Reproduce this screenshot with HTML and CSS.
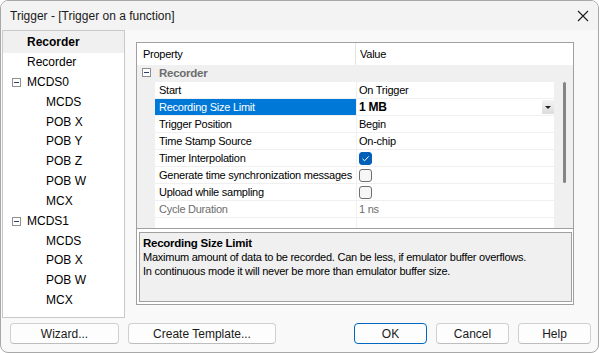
FILE: index.html
```html
<!DOCTYPE html>
<html lang="en">
<head>
    <meta charset="UTF-8">
    <title>Trigger - [Trigger on a function]</title>
    <link rel="stylesheet" href="styles.css">
</head>
<body>
<div class="window">
    <div class="titlebar">
        <span class="title">Trigger - [Trigger on a function]</span>
        <svg class="close" width="12" height="12" viewBox="0 0 12 12">
            <path d="M1 1 L11 11 M11 1 L1 11" stroke="#1b1b1b" stroke-width="1.1" fill="none"/>
        </svg>
    </div>

    <div class="content">
        <div class="tree">
            <div class="node first selected"><b>Recorder</b></div>
            <div class="node top">Recorder</div>
            <div class="node top"><span class="expander"></span>MCDS0</div>
            <div class="node child">MCDS</div>
            <div class="node child">POB X</div>
            <div class="node child">POB Y</div>
            <div class="node child">POB Z</div>
            <div class="node child">POB W</div>
            <div class="node child">MCX</div>
            <div class="node top"><span class="expander"></span>MCDS1</div>
            <div class="node child">MCDS</div>
            <div class="node child">POB X</div>
            <div class="node child">POB W</div>
            <div class="node child">MCX</div>
        </div>

        <div class="panel">
            <div class="grid">
                <div class="grid-head">
                    <div class="h-prop">Property</div>
                    <div class="h-val">Value</div>
                </div>
                <div class="grid-body">
                    <div class="rows">
                        <div class="row cat">
                            <div class="gutter"><span class="expander"></span></div>
                            <div class="cat-name">Recorder</div>
                        </div>
                        <div class="row">
                            <div class="gutter"></div>
                            <div class="name">Start</div>
                            <div class="value">On Trigger</div>
                        </div>
                        <div class="row">
                            <div class="gutter"></div>
                            <div class="name active">Recording Size Limit</div>
                            <div class="value"><b>1 MB</b><span class="drop"></span></div>
                        </div>
                        <div class="row">
                            <div class="gutter"></div>
                            <div class="name">Trigger Position</div>
                            <div class="value">Begin</div>
                        </div>
                        <div class="row">
                            <div class="gutter"></div>
                            <div class="name">Time Stamp Source</div>
                            <div class="value">On-chip</div>
                        </div>
                        <div class="row">
                            <div class="gutter"></div>
                            <div class="name">Timer Interpolation</div>
                            <div class="value">
                                <span class="check on">
                                    <svg width="9" height="9" viewBox="0 0 9 9"><path d="M1.5 4.8 L3.6 6.8 L7.6 2.4" stroke="#fff" stroke-width="1" fill="none"/></svg>
                                </span>
                            </div>
                        </div>
                        <div class="row">
                            <div class="gutter"></div>
                            <div class="name">Generate time synchronization messages</div>
                            <div class="value"><span class="check"></span></div>
                        </div>
                        <div class="row">
                            <div class="gutter"></div>
                            <div class="name">Upload while sampling</div>
                            <div class="value"><span class="check"></span></div>
                        </div>
                        <div class="row dim">
                            <div class="gutter"></div>
                            <div class="name">Cycle Duration</div>
                            <div class="value">1 ns</div>
                        </div>
                        <div class="row filler">
                            <div class="gutter"></div>
                            <div class="name"></div>
                            <div class="value"></div>
                        </div>
                    </div>
                    <div class="scrollbar"><div class="thumb"></div></div>
                </div>
            </div>
            <div class="desc">
                <div class="desc-title">Recording Size Limit</div>
                <div>Maximum amount of data to be recorded. Can be less, if emulator buffer overflows.</div>
                <div>In continuous mode it will never be more than emulator buffer size.</div>
            </div>
        </div>
    </div>

    <div class="buttons">
        <button class="btn wizard">Wizard...</button>
        <button class="btn template">Create Template...</button>
        <span class="grow"></span>
        <button class="btn small default">OK</button>
        <button class="btn small">Cancel</button>
        <button class="btn small">Help</button>
    </div>
</div>
</body>
</html>
```

FILE: styles.css
```css
body {
    margin: 0;
    font-family: "Liberation Sans", Arial, sans-serif;
    background: #ffffff;
}
.window {
    width: 599px;
    height: 353px;
    box-sizing: border-box;
    border: 1px solid #a8a8a8;
    border-radius: 8px;
    overflow: hidden;
    background: #f9f9f9;
    display: flex;
    flex-direction: column;
}
.titlebar {
    height: 29px;
    flex: none;
    background: #f3f3f3;
    display: flex;
    align-items: center;
    justify-content: space-between;
    padding: 1px 8px 0 9px;
    box-sizing: border-box;
    font-size: 12px;
    color: #1a1a1a;
}
.close {
    margin-right: 1px;
}
.content {
    display: flex;
    height: 288px;
    flex: none;
}

/* left tree */
.tree {
    width: 123px;
    margin-left: 1px;
    box-sizing: border-box;
    border: 1px solid #c9c9c9;
    background: #fff;
    font-size: 12px;
    color: #000;
}
.node {
    height: 19.85px;
    line-height: 19.85px;
    padding-left: 24px;
    display: flex;
    align-items: center;
    white-space: nowrap;
}
.node.first {
    height: 22px;
    line-height: 22px;
}
.node.selected {
    background: #f0f0f0;
}
.node.child {
    padding-left: 43px;
}
.node .expander {
    margin-left: -15px;
    margin-right: 6px;
}
.expander {
    width: 9px;
    height: 9px;
    box-sizing: border-box;
    border: 1px solid #919191;
    background: #fff;
    position: relative;
    flex: none;
    display: inline-block;
}
.expander::after {
    content: "";
    position: absolute;
    left: 1px;
    top: 3px;
    width: 5px;
    height: 1px;
    background: #2b3f6b;
}

/* property panel */
.panel {
    margin: 12px 24px 0 11px;
    height: 263px;
    flex: 1;
    box-sizing: border-box;
    border: 1px solid #a0a0a0;
    background: #fff;
    display: flex;
    flex-direction: column;
    font-size: 11px;
    letter-spacing: -0.25px;
    color: #000;
}
.grid {
    border-bottom: 1px solid #a0a0a0;
}
.grid-head {
    height: 22px;
    display: flex;
    line-height: 22px;
}
.h-prop {
    width: 219px;
    padding-left: 6px;
    box-sizing: border-box;
    border-right: 1px solid #e3e3e3;
}
.h-val {
    padding-left: 4px;
}
.grid-body {
    display: flex;
    height: 163px;
}
.rows {
    flex: 1;
    display: flex;
    flex-direction: column;
}
.row {
    display: flex;
    height: 17px;
    line-height: 16px;
}
.gutter {
    width: 18px;
    flex: none;
    background: #f0f0f0;
    display: flex;
    align-items: center;
}
.gutter .expander {
    margin-left: 5px;
    margin-top: -1px;
    border-color: #8e8e8e;
}
.name {
    width: 202px;
    flex: none;
    box-sizing: border-box;
    padding-left: 4px;
    border-right: 1px solid #f0f0f0;
    border-bottom: 1px solid #f0f0f0;
    white-space: nowrap;
    overflow: hidden;
}
.name.active {
    background: #0078d7;
    color: #fff;
}
.value {
    flex: 1;
    padding-left: 2px;
    border-bottom: 1px solid #f0f0f0;
    display: flex;
    align-items: center;
}
.value b {
    font-size: 12px;
    flex: 1;
}
.row.cat {
    background: #f0f0f0;
    border-bottom: 1px solid #f0f0f0;
    box-sizing: border-box;
}
.cat-name {
    padding-left: 4px;
    font-weight: bold;
    font-size: 11.5px;
    color: #6d6d6d;
}
.row.dim {
    color: #6d6d6d;
}
.row.filler {
    flex: 1;
}
.row.filler .name,
.row.filler .value {
    border-bottom: none;
}
.drop {
    width: 12px;
    height: 14px;
    margin-top: -1px;
    background: linear-gradient(#f4f4f4, #dcdcdc);
    position: relative;
}
.drop::after {
    content: "";
    position: absolute;
    left: 3px;
    top: 6px;
    border-left: 3px solid transparent;
    border-right: 3px solid transparent;
    border-top: 3px solid #222;
}
.check {
    width: 13px;
    height: 13px;
    box-sizing: border-box;
    border: 1px solid #6e6e6e;
    border-radius: 3px;
    background: #f6f6f6;
    display: flex;
    align-items: center;
    justify-content: center;
}
.check.on {
    background: #005fb8;
    border-color: #005fb8;
}
.scrollbar {
    width: 19px;
    flex: none;
    background: #f0f0f0;
    padding-top: 17px;
    box-sizing: border-box;
}
.thumb {
    width: 3px;
    height: 101px;
    margin-left: 9px;
    border-radius: 2px;
    background: #858585;
}

/* description */
.desc {
    margin: 3px 1px 2px 2px;
    height: 70px;
    box-sizing: border-box;
    border: 1px solid #a0a0a0;
    background: #f0f0f0;
    padding: 3px 0 0 3px;
    line-height: 14px;
}
.desc-title {
    font-weight: bold;
    font-size: 11.5px;
}

/* bottom buttons */
.buttons {
    display: flex;
    gap: 9px;
    padding: 5px 7px 0 9px;
}
.grow {
    flex: 1;
}
.btn {
    height: 21px;
    box-sizing: border-box;
    border: 1px solid #d0d0d0;
    border-bottom-color: #bdbdbd;
    border-radius: 4px;
    background: #fdfdfd;
    font-family: "Liberation Sans", Arial, sans-serif;
    font-size: 12px;
    color: #1a1a1a;
    padding: 0;
}
.wizard {
    width: 109px;
}
.template {
    width: 148px;
}
.small {
    width: 73px;
}
.default {
    border: 1px solid #0067c0;
}
```
